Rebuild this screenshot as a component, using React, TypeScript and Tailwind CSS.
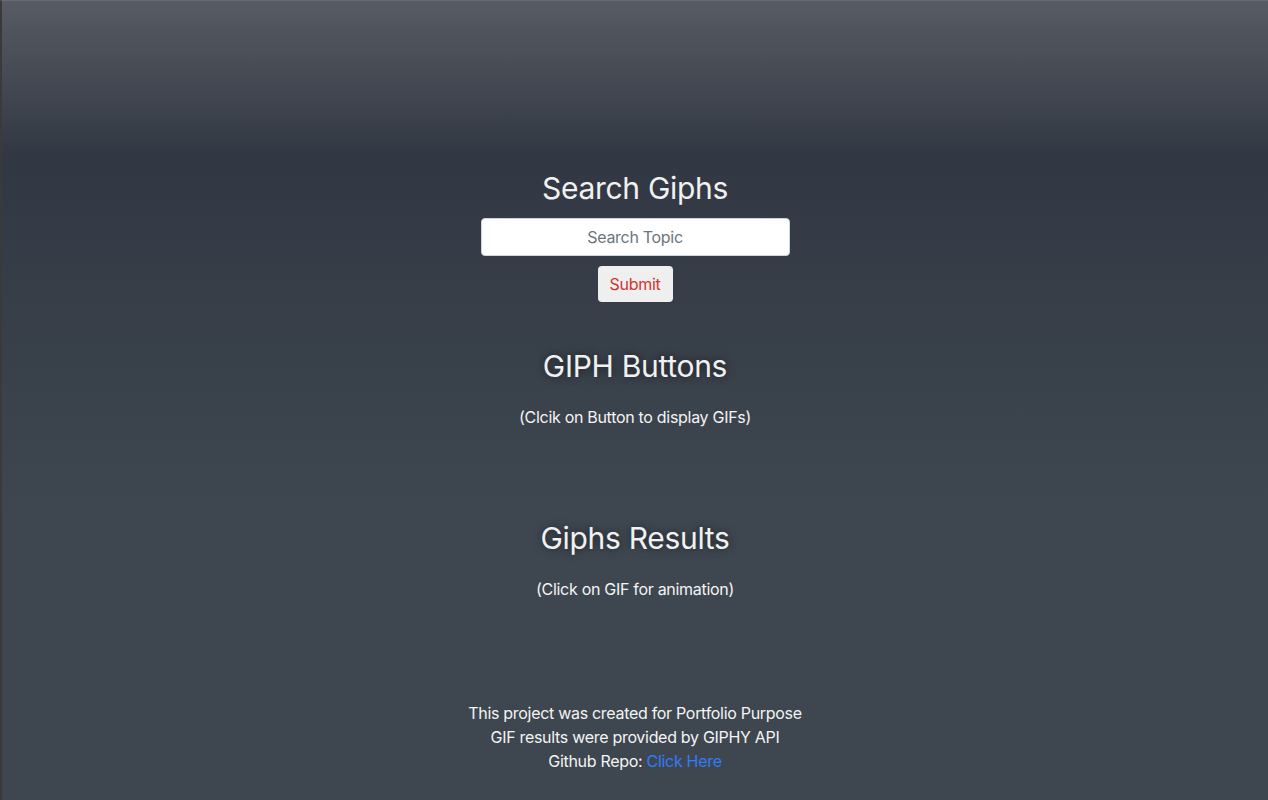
import { useState } from 'react'

export default function App() {
  const [topic, setTopic] = useState('')

  return (
    <div
      className="min-h-[800px] border-l-2 border-t border-l-[#3a3a3a] border-t-[#6a6a6a] bg-[linear-gradient(to_bottom,#575b63_0px,#323843_155px,#3e4750_520px,#3e4750_100%)] text-white flex flex-col items-center tracking-[-0.3px]"
      style={{ fontFamily: 'Inter, "Noto Sans", sans-serif' }}
    >
      {/* Search */}
      <h2 className="mt-[167px] text-[30px] leading-[40px] text-[#f1f1f1]">Search Giphs</h2>
      <input
        value={topic}
        onChange={(e) => setTopic(e.target.value)}
        placeholder="Search Topic"
        className="mt-[10px] w-[309px] h-[38px] rounded-[4px] border border-[#ced4da] bg-white text-center text-base text-[#495057] placeholder:text-[#6c757d] outline-none"
      />
      <button className="mt-[10px] w-[75px] h-[36px] rounded-[4px] bg-[#efefef] text-base text-[#d0342c]">
        Submit
      </button>

      {/* Buttons */}
      <h2 className="mt-[44px] text-[30px] leading-[40px] text-[#f1f1f1] [text-shadow:0_0_8px_rgba(0,0,0,0.6)]">
        GIPH Buttons
      </h2>
      <p className="mt-[19px] text-base leading-[24px] text-[#f4f4f4]">(Clcik on Button to display GIFs)</p>

      {/* Results */}
      <h2 className="mt-[89px] text-[30px] leading-[40px] text-[#f1f1f1] [text-shadow:0_0_8px_rgba(0,0,0,0.6)]">
        Giphs Results
      </h2>
      <p className="mt-[19px] text-base leading-[24px] text-[#f4f4f4]">(Click on GIF for animation)</p>

      {/* Footer */}
      <footer className="mt-[100px] text-center text-base leading-[24px] text-[#f4f4f4]">
        <p>This project was created for Portfolio Purpose</p>
        <p>GIF results were provided by GIPHY API</p>
        <p>
          Github Repo: <a className="text-[#2f7cf6]">Click Here</a>
        </p>
      </footer>
    </div>
  )
}
